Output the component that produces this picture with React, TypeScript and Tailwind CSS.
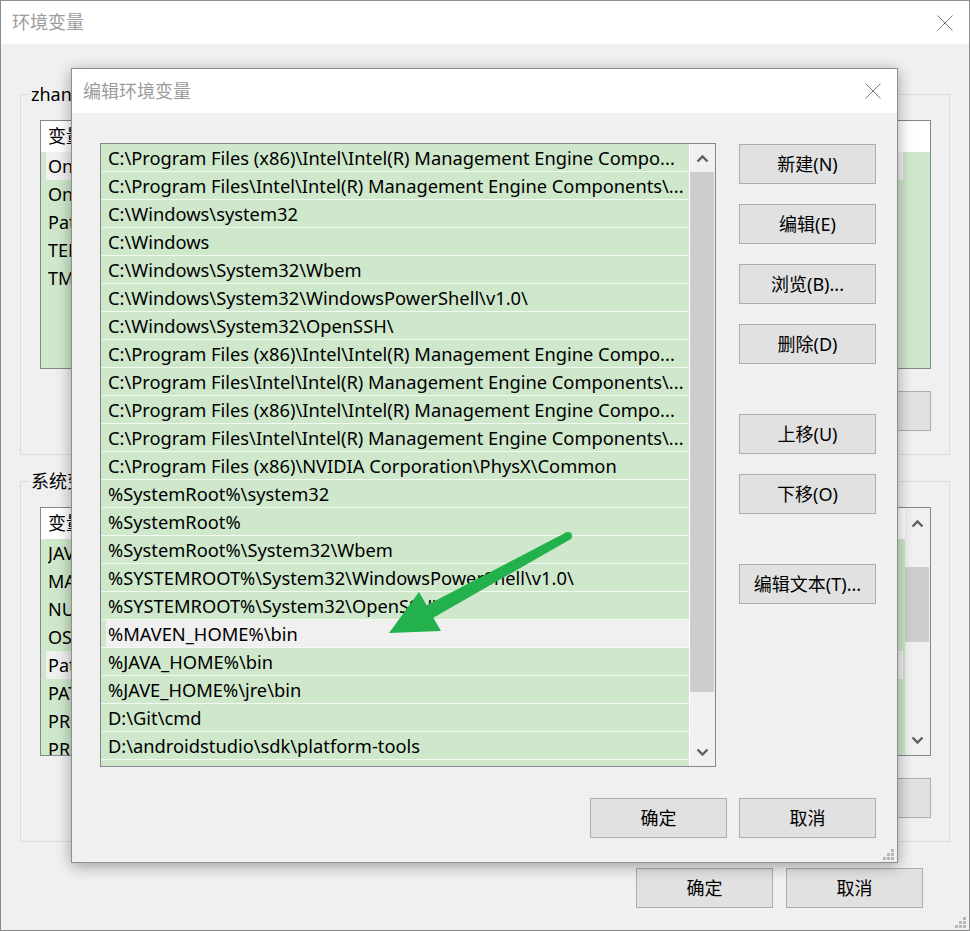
import React from 'react';

const FONT = "font-['Noto_Sans','Noto_Sans_CJK_SC',sans-serif]";

const userVars: [string, string][] = [
  ['OneDrive', 'C:\\Users\\zhangsan\\OneDrive'],
  ['OneDriveConsumer', 'C:\\Users\\zhangsan\\OneDrive'],
  ['Path', 'C:\\Users\\zhangsan\\AppData\\Local\\Microsoft\\WindowsApps;'],
  ['TEMP', 'C:\\Users\\zhangsan\\AppData\\Local\\Temp'],
  ['TMP', 'C:\\Users\\zhangsan\\AppData\\Local\\Temp'],
];

const systemVars: [string, string][] = [
  ['JAVA_HOME', 'C:\\Program Files\\Java\\jdk1.8.0_202'],
  ['MAVEN_HOME', 'D:\\apache-maven-3.6.3'],
  ['NUMBER_OF_PROCESSORS', '8'],
  ['OS', 'Windows_NT'],
  ['Path', 'C:\\Program Files (x86)\\Intel\\Intel(R) Management Engine Components\\iCLS\\'],
  ['PATHEXT', '.COM;.EXE;.BAT;.CMD;.VBS;.VBE;.JS;.JSE;.WSF;.WSH;.MSC'],
  ['PROCESSOR_ARCHITECTURE', 'AMD64'],
  ['PROCESSOR_IDENTIFIER', 'Intel64 Family 6 Model 158 Stepping 10, GenuineIntel'],
];

const paths = [
  'C:\\Program Files (x86)\\Intel\\Intel(R) Management Engine Compo...',
  'C:\\Program Files\\Intel\\Intel(R) Management Engine Components\\...',
  'C:\\Windows\\system32',
  'C:\\Windows',
  'C:\\Windows\\System32\\Wbem',
  'C:\\Windows\\System32\\WindowsPowerShell\\v1.0\\',
  'C:\\Windows\\System32\\OpenSSH\\',
  'C:\\Program Files (x86)\\Intel\\Intel(R) Management Engine Compo...',
  'C:\\Program Files\\Intel\\Intel(R) Management Engine Components\\...',
  'C:\\Program Files (x86)\\Intel\\Intel(R) Management Engine Compo...',
  'C:\\Program Files\\Intel\\Intel(R) Management Engine Components\\...',
  'C:\\Program Files (x86)\\NVIDIA Corporation\\PhysX\\Common',
  '%SystemRoot%\\system32',
  '%SystemRoot%',
  '%SystemRoot%\\System32\\Wbem',
  '%SYSTEMROOT%\\System32\\WindowsPowerShell\\v1.0\\',
  '%SYSTEMROOT%\\System32\\OpenSSH\\',
  '%MAVEN_HOME%\\bin',
  '%JAVA_HOME%\\bin',
  '%JAVE_HOME%\\jre\\bin',
  'D:\\Git\\cmd',
  'D:\\androidstudio\\sdk\\platform-tools',
  'C:\\Program Files\\nodejs\\',
];

function CloseIcon() {
  return (
    <svg width="16" height="16" viewBox="0 0 16 16">
      <path d="M0.5 0.5 L15.5 15.5 M15.5 0.5 L0.5 15.5" stroke="#7a7a7a" strokeWidth="1" fill="none" />
    </svg>
  );
}

function Chevron({ down = false }: { down?: boolean }) {
  return (
    <svg width="13" height="9" viewBox="0 0 13 9">
      <path
        d={down ? 'M1.5 1.5 L6.5 6.5 L11.5 1.5' : 'M1.5 7.5 L6.5 2.5 L11.5 7.5'}
        stroke="#606060"
        strokeWidth="2.4"
        fill="none"
      />
    </svg>
  );
}

function Grip() {
  return (
    <svg width="11" height="11" viewBox="0 0 11 11" fill="#b8b8b8">
      <rect x="8" y="0" width="3" height="3" />
      <rect x="4" y="4" width="3" height="3" />
      <rect x="8" y="4" width="3" height="3" />
      <rect x="0" y="8" width="3" height="3" />
      <rect x="4" y="8" width="3" height="3" />
      <rect x="8" y="8" width="3" height="3" />
    </svg>
  );
}

function WinButton({ children }: { children: React.ReactNode }) {
  return (
    <button className="w-[137px] h-[40px] shrink-0 bg-[#e1e1e1] border border-[#adadad] text-[18px] text-black flex items-center justify-center">
      {children}
    </button>
  );
}

function VarList({ rows, selected, scroll }: { rows: [string, string][]; selected: number; scroll?: boolean }) {
  return (
    <div className="w-[891px] h-[249px] border border-[#828790] bg-[#cfe8cc] flex overflow-hidden">
      <div className="flex-1 min-w-0 flex flex-col">
        <div className="h-[31px] shrink-0 bg-white flex items-center pl-[7px] whitespace-nowrap">
          <span className="w-[262px]">变量</span>
          <span>值</span>
        </div>
        {rows.map(([k, v], i) => (
          <div key={k} className="h-[28px] shrink-0 flex">
            <div
              className={`ml-[5px] w-[857px] flex items-center pl-[2px] whitespace-nowrap overflow-hidden ${
                i === selected ? 'bg-[#f0f0f0]' : ''
              }`}
            >
              <span className="w-[255px] shrink-0 overflow-hidden">{k}</span>
              <span className="w-[520px] shrink-0 overflow-hidden">{v}</span>
            </div>
          </div>
        ))}
      </div>
      {scroll && (
        <div className="w-[25px] shrink-0 bg-[#f0f0f0] flex flex-col">
          <div className="h-[30px] shrink-0 flex items-center justify-center">
            <Chevron />
          </div>
          <div className="flex-1">
            <div className="mt-[29px] h-[75px] w-[24px] bg-[#cdcdcd]" />
          </div>
          <div className="h-[30px] shrink-0 flex items-center justify-center">
            <Chevron down />
          </div>
        </div>
      )}
    </div>
  );
}

function GroupBox({ label, children }: { label: string; children: React.ReactNode }) {
  return (
    <div className="relative w-[930px] h-[361px] border border-[#dcdcdc] pt-[25px] pl-[19px]">
      <span className="absolute left-[9px] -top-[14px] px-[1px] bg-[#f0f0f0] text-[18px] leading-[26px]">{label}</span>
      {children}
    </div>
  );
}

function EditDialog() {
  return (
    <div className="absolute left-[70px] top-[67px] w-[827px] h-[795px] border border-[#8f8f8f] bg-[#f0f0f0] shadow-[0_3px_14px_rgba(0,0,0,0.35)] flex flex-col">
      <div className="h-[44px] shrink-0 bg-white flex items-center justify-between pl-[11px] pr-[16px]">
        <span className="text-[18px] text-[#9b9b9b]">编辑环境变量</span>
        <CloseIcon />
      </div>
      <div className="flex-1 flex flex-col pt-[30px] pl-[28px] pr-[21px]">
        <div className="flex">
          <div className="w-[616px] h-[624px] border border-[#828790] flex overflow-hidden">
            <div className="w-[588px] shrink-0 flex flex-col text-[18.3px]">
              {paths.map((p, i) => (
                <div key={i} className="h-[28px] shrink-0 bg-[#cfe8cc] border-b border-[#f4faf3] flex">
                  <div
                    className={`flex-1 flex items-center whitespace-nowrap overflow-hidden ${
                      i === 17 ? 'ml-[5px] pl-[2px] bg-[#f0f0f0]' : 'pl-[7px]'
                    }`}
                  >
                    {p}
                  </div>
                </div>
              ))}
            </div>
            <div className="w-[26px] shrink-0 bg-[#f0f0f0] border-l border-white flex flex-col">
              <div className="h-[28px] shrink-0 flex items-center justify-center">
                <Chevron />
              </div>
              <div className="flex-1">
                <div className="h-[520px] w-[24px] bg-[#cdcdcd]" />
              </div>
              <div className="h-[28px] shrink-0 flex items-center justify-center">
                <Chevron down />
              </div>
            </div>
          </div>
          <div className="ml-[23px] mt-[1px] flex flex-col">
            <WinButton>新建(N)</WinButton>
            <div className="mt-[20px]"><WinButton>编辑(E)</WinButton></div>
            <div className="mt-[20px]"><WinButton>浏览(B)...</WinButton></div>
            <div className="mt-[20px]"><WinButton>删除(D)</WinButton></div>
            <div className="mt-[50px]"><WinButton>上移(U)</WinButton></div>
            <div className="mt-[20px]"><WinButton>下移(O)</WinButton></div>
            <div className="mt-[50px]"><WinButton>编辑文本(T)...</WinButton></div>
          </div>
        </div>
        <div className="mt-[31px] flex justify-end gap-[12px]">
          <WinButton>确定</WinButton>
          <WinButton>取消</WinButton>
        </div>
      </div>
      <div className="absolute right-[3px] bottom-[2px]">
        <Grip />
      </div>
    </div>
  );
}

export default function App() {
  return (
    <div className={`relative w-[970px] h-[931px] overflow-hidden bg-[#f0f0f0] border border-[#8c8c8c] text-black text-[18px] ${FONT}`}>
      {/* outer window: 环境变量 */}
      <div className="h-[43px] bg-white flex items-center justify-between pl-[11px] pr-[16px]">
        <span className="text-[18px] text-[#9b9b9b]">环境变量</span>
        <CloseIcon />
      </div>
      <div className="pt-[50px] pl-[19px] flex flex-col">
        <GroupBox label="zhangsan 的用户变量(U)">
          <VarList rows={userVars} selected={0} />
          <div className="mt-[22px] w-[891px] flex justify-end gap-[13px]">
            <WinButton>新建(N)...</WinButton>
            <WinButton>编辑(E)...</WinButton>
            <WinButton>删除(D)</WinButton>
          </div>
        </GroupBox>
        <div className="mt-[26px]">
          <GroupBox label="系统变量(S)">
            <VarList rows={systemVars} selected={4} scroll />
            <div className="mt-[22px] w-[891px] flex justify-end gap-[13px]">
              <WinButton>新建(W)...</WinButton>
              <WinButton>编辑(I)...</WinButton>
              <WinButton>删除(L)</WinButton>
            </div>
          </GroupBox>
        </div>
        <div className="mt-[26px] w-[903px] flex justify-end gap-[13px]">
          <WinButton>确定</WinButton>
          <WinButton>取消</WinButton>
        </div>
      </div>
      <div className="absolute right-[3px] bottom-[2px]">
        <Grip />
      </div>

      <EditDialog />

      {/* green annotation arrow */}
      <svg className="absolute left-0 top-0 pointer-events-none" width="970" height="931" viewBox="0 0 970 931">
        <polygon
          points="565,531.5 425.7,604.3 418,591 388,632 440,630 432.3,616.7 569,538.5"
          fill="#22b14c"
        />
        <circle cx="567" cy="535" r="4" fill="#22b14c" />
      </svg>
    </div>
  );
}
